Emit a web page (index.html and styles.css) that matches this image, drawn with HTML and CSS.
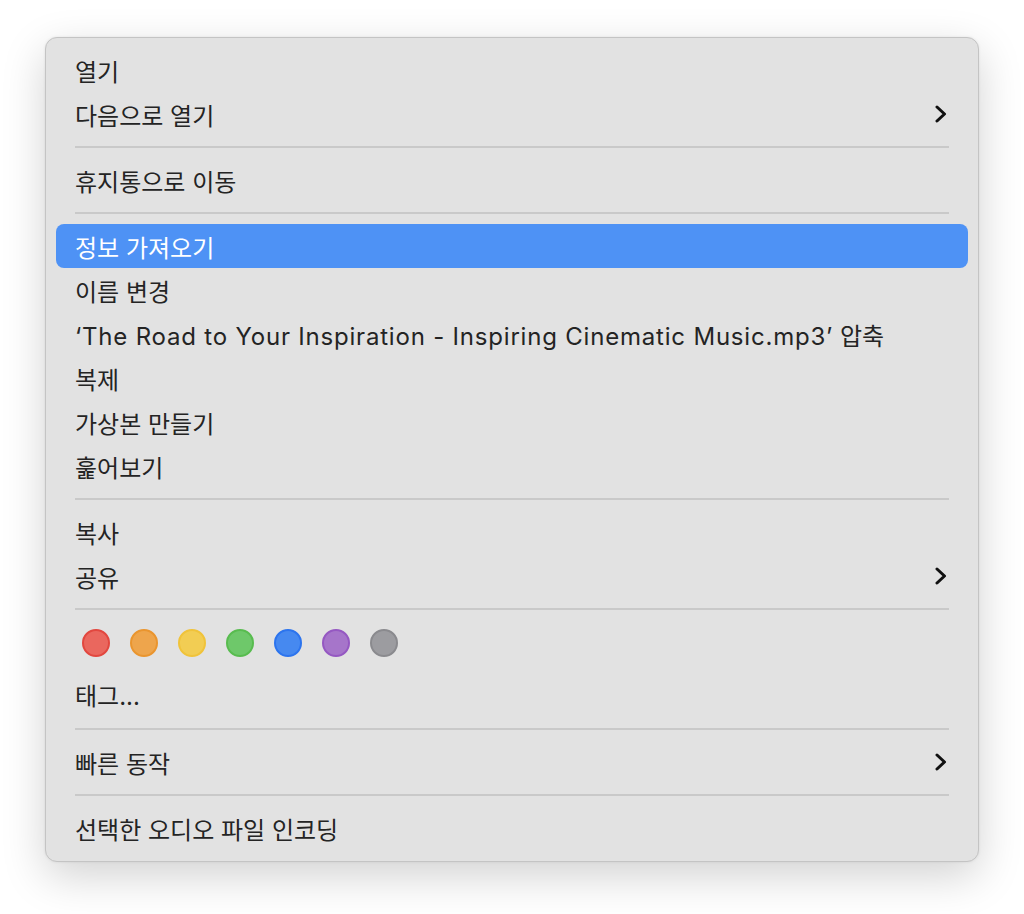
FILE: index.html
```html
<!DOCTYPE html>
<html lang="ko">

<head>
    <meta charset="utf-8">
    <meta name="viewport" content="width=device-width, initial-scale=1.0">
    <title>Context menu</title>
    <link rel="stylesheet" href="styles.css">
</head>

<body>

    <div class="menu">
        <div class="item">열기</div>
        <div class="item">다음으로 열기
            <svg class="chevron" viewBox="0 0 12 18"><polyline points="2,2 9.5,9 2,16" /></svg>
        </div>
        <div class="sep"></div>
        <div class="item">휴지통으로 이동</div>
        <div class="sep"></div>
        <div class="item valgt">정보 가져오기</div>
        <div class="item">이름 변경</div>
        <div class="item"><span><span class="latin">‘The Road to Your Inspiration - Inspiring Cinematic Music.mp3’</span> 압축</span></div>
        <div class="item">복제</div>
        <div class="item">가상본 만들기</div>
        <div class="item">훑어보기</div>
        <div class="sep"></div>
        <div class="item">복사</div>
        <div class="item">공유
            <svg class="chevron" viewBox="0 0 12 18"><polyline points="2,2 9.5,9 2,16" /></svg>
        </div>
        <div class="sep"></div>
        <div class="tags">
            <span class="dot red"></span>
            <span class="dot orange"></span>
            <span class="dot yellow"></span>
            <span class="dot green"></span>
            <span class="dot blue"></span>
            <span class="dot purple"></span>
            <span class="dot grey"></span>
        </div>
        <div class="item tag-item">태그...</div>
        <div class="sep"></div>
        <div class="item">빠른 동작
            <svg class="chevron" viewBox="0 0 12 18"><polyline points="2,2 9.5,9 2,16" /></svg>
        </div>
        <div class="sep"></div>
        <div class="item">선택한 오디오 파일 인코딩</div>
    </div>

</body>

</html>
```

FILE: styles.css
```css
body {
    box-sizing: border-box;
    min-height: 914px;
    margin: 0;
    padding: 37px 0 0 45px;
    background-color: #ffffff;
    font-family: Inter, "Noto Sans CJK KR", sans-serif;
}

.menu {
    width: 912px;
    padding: 10px 10px 11px;
    background-color: #e2e2e2;
    border: 1px solid #c4c4c4;
    border-radius: 12px;
    box-shadow: 0px 14px 44px rgba(0, 0, 0, 0.18), 0px 0px 3px rgba(0, 0, 0, 0.08);
}

.item {
    height: 44px;
    padding: 0 21px 0 19px;
    display: flex;
    align-items: center;
    justify-content: space-between;

    font-size: 24px;
    color: #242424;
    border-radius: 8px;
}

.tag-item {
    padding-bottom: 2px;
}

.latin {
    letter-spacing: 0.8px;
}

.valgt {
    background-color: #4e92f5;
    color: #ffffff;
}

.chevron {
    width: 12px;
    height: 18px;
    fill: none;
    stroke: #111111;
    stroke-width: 3;
    stroke-linecap: round;
    stroke-linejoin: round;
}

.sep {
    height: 2px;
    margin: 10px 19px;
    background-color: #c9c9c9;
}

.tags {
    display: flex;
    gap: 20px;
    padding: 9px 26px 15px;
}

.dot {
    width: 24px;
    height: 24px;
    border-radius: 50%;
    border: 2px solid;
}

.red {
    background-color: #ea675e;
    border-color: #e2473f;
}

.orange {
    background-color: #eea54c;
    border-color: #ea952e;
}

.yellow {
    background-color: #f2cd53;
    border-color: #f0c33a;
}

.green {
    background-color: #6ec86a;
    border-color: #58bc4f;
}

.blue {
    background-color: #4689f0;
    border-color: #2c74ee;
}

.purple {
    background-color: #a675ca;
    border-color: #9558c2;
}

.grey {
    background-color: #9c9ca0;
    border-color: #8a8a8e;
}
```
